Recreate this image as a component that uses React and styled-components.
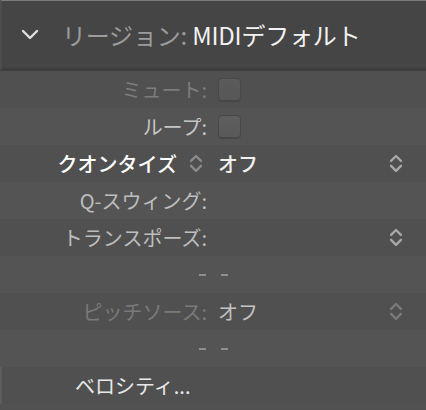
import React from "react";
import styled, { createGlobalStyle } from "styled-components";

const GlobalStyle = createGlobalStyle`
  html, body { margin: 0; padding: 0; background: #505050; }
  body { font-family: "Noto Sans CJK JP", "Noto Sans", sans-serif; }
`;

const Panel = styled.div`
  width: 426px;
  height: 410px;
  overflow: hidden;
  background: #515151;
`;

const Header = styled.div`
  height: 71px;
  display: flex;
  align-items: center;
  gap: 22px;
  padding-left: 18px;
  background: #454545;
  border-top: 1px solid #7c7c7c;
  border-left: 2px solid #4d4d4d;
  border-bottom: 3px solid #3d3d3d;
  box-sizing: border-box;
`;

const HeaderTitle = styled.div`
  font-size: 24px;
  letter-spacing: -0.2px;
  color: #9b9b9b;
  white-space: nowrap;
  span { color: #f2f2f2; }
`;

const Row = styled.div`
  height: 37px;
  display: grid;
  grid-template-columns: 207px 1fr 38px;
  column-gap: 11px;
  align-items: center;
  background: ${(p) => (p.$alt ? "#545454" : "#505050")};
  box-sizing: border-box;
`;

const Label = styled.div`
  text-align: right;
  font-size: 20px;
  font-weight: ${(p) => (p.$bold ? 500 : 400)};
  color: ${(p) => p.$color || "#c4c4c4"};
  white-space: nowrap;
  display: flex;
  justify-content: flex-end;
  align-items: center;
  gap: 11px;
  padding-right: ${(p) => (p.$bold ? "3px" : "0")};
`;

const Value = styled.div`
  font-size: 20px;
  font-weight: ${(p) => (p.$bold ? 500 : 400)};
  color: ${(p) => p.$color || "#f0f0f0"};
  white-space: nowrap;
`;

const Checkbox = styled.div`
  width: 21px;
  height: 21px;
  border-radius: 4px;
  background: linear-gradient(#5e5e5e, #595959);
  border: 1px solid #474747;
  box-shadow: 0 1px 0 rgba(0, 0, 0, 0.15);
  opacity: ${(p) => (p.$disabled ? 0.8 : 1)};
`;

const DashRow = styled.div`
  height: 37px;
  display: flex;
  justify-content: center;
  align-items: center;
  gap: 15px;
  padding-left: 1px;
  box-sizing: border-box;
  background: ${(p) => (p.$alt ? "#545454" : "#505050")};
`;

const Dash = styled.span`
  width: 7px;
  height: 2px;
  background: #8e8e8e;
`;

const Disclosure = styled.div`
  height: 37px;
  display: flex;
  align-items: center;
  padding-left: 73px;
  font-size: 20px;
  color: #e8e8e8;
  background: ${(p) => (p.$alt ? "#545454" : "#505050")};
  border-left: 2px solid #5c5c5c;
  box-sizing: border-box;
`;

const Stepper = ({ color = "#a8a8a8", size = 16 }) => (
  <svg width={size} height={size * 1.3} viewBox="0 0 16 21" fill="none" stroke={color} strokeWidth="2.4" strokeLinecap="round" strokeLinejoin="round">
    <polyline points="3,8 8,3 13,8" />
    <polyline points="3,13 8,18 13,13" />
  </svg>
);

const Chevron = () => (
  <svg width="20" height="14" viewBox="0 0 20 14" fill="none" stroke="#e0e0e0" strokeWidth="2.4" strokeLinecap="round" strokeLinejoin="round">
    <polyline points="3,3 10,10 17,3" />
  </svg>
);

export default function App() {
  return (
    <Panel>
      <GlobalStyle />
      <Header>
        <Chevron />
        <HeaderTitle>
          リージョン: <span>MIDIデフォルト</span>
        </HeaderTitle>
      </Header>

      <Row>
        <Label $color="#7c7c7c">ミュート:</Label>
        <div><Checkbox $disabled /></div>
        <span />
      </Row>
      <Row $alt>
        <Label $color="#c6c6c6">ループ:</Label>
        <div><Checkbox /></div>
        <span />
      </Row>
      <Row>
        <Label $bold $color="#ffffff">
          クオンタイズ <Stepper color="#8a8a8a" />
        </Label>
        <Value $bold>オフ</Value>
        <Stepper />
      </Row>
      <Row $alt>
        <Label $color="#bdbdbd">Q-スウィング:</Label>
        <span />
        <span />
      </Row>
      <Row>
        <Label $color="#bdbdbd">トランスポーズ:</Label>
        <span />
        <Stepper />
      </Row>
      <DashRow $alt>
        <Dash />
        <Dash />
      </DashRow>
      <Row>
        <Label $color="#7a7a7a">ピッチソース:</Label>
        <Value $color="#c2c2c2">オフ</Value>
        <Stepper color="#7a7a7a" />
      </Row>
      <DashRow $alt>
        <Dash />
        <Dash />
      </DashRow>
      <Disclosure>ベロシティ...</Disclosure>
    </Panel>
  );
}
